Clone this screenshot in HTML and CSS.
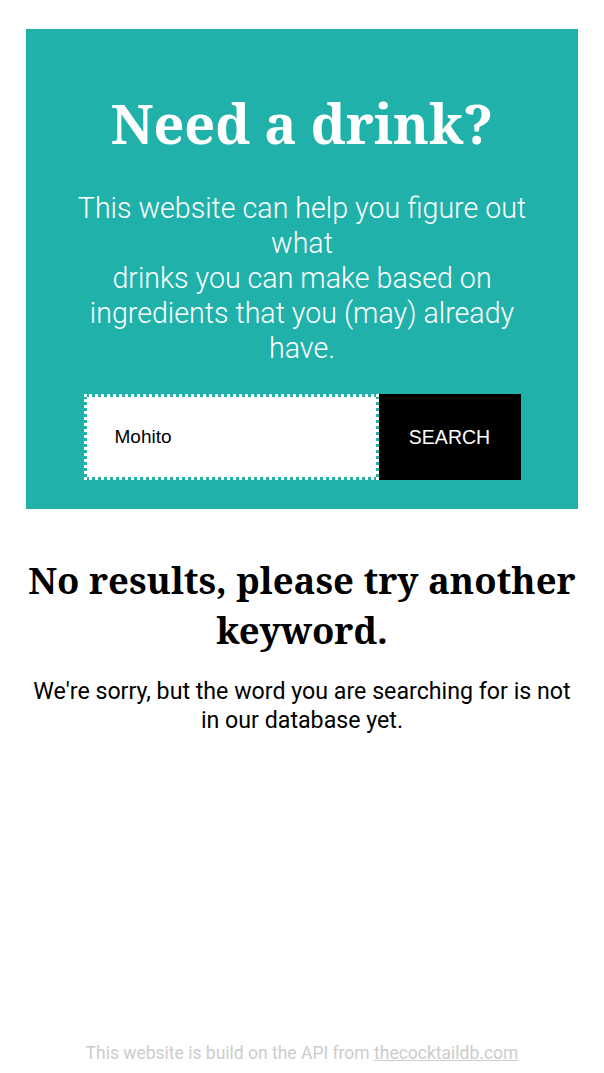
FILE: index.html
```html
<!DOCTYPE html>
<html lang="en">
<head>
<meta charset="utf-8">
<title>Need a drink?</title>
<link rel="stylesheet" href="styles.css">
</head>
<body>
<div class="page">
  <header class="hero">
    <h1 class="hero-title">Need a drink?</h1>
    <p class="hero-text">This website can help you figure out what<br>drinks you can make based on ingredients that you (may) already have.</p>
    <form class="search">
      <input class="search-input" type="text" value="Mohito">
      <button class="search-button" type="button">SEARCH</button>
    </form>
  </header>
  <main class="results">
    <h2 class="results-title">No results, please try another keyword.</h2>
    <p class="results-text">We're sorry, but the word you are searching for is not in our database yet.</p>
  </main>
  <footer class="footer">This website is build on the API from <a class="footer-link" href="#">thecocktaildb.com</a></footer>
</div>
</body>
</html>
```

FILE: styles.css
```css
html, body {
  margin: 0;
  padding: 0;
  background: #fff;
}
.page {
  min-height: 100vh;
  box-sizing: border-box;
  padding: 29px 26px 0;
  display: flex;
  flex-direction: column;
  font-family: Roboto, "Noto Sans", sans-serif;
}
.hero {
  background: #20b2aa;
  height: 480px;
  box-sizing: border-box;
  padding: 56px 40px 0;
  display: flex;
  flex-direction: column;
  align-items: center;
  color: #fff;
  text-align: center;
}
.hero-title {
  margin: 0;
  font-family: "Noto Serif", "DejaVu Serif", serif;
  font-weight: 700;
  font-size: 54px;
  line-height: 76px;
}
.hero-text {
  margin: 30px 0 0;
  font-weight: 300;
  font-size: 28.6px;
  line-height: 35px;
}
.search {
  margin-top: 28px;
  display: flex;
}
.search-input {
  width: 295px;
  height: 86px;
  box-sizing: border-box;
  border: 3px dotted #fff;
  outline: none;
  padding: 0 0 0 28px;
  font-family: "Liberation Sans", Arial, sans-serif;
  font-size: 19px;
  color: #000;
  background: #fff;
  background-clip: padding-box;
}
.search-button {
  width: 142px;
  height: 86px;
  border: 0;
  background: #000;
  color: #fff;
  font-family: "Liberation Sans", Arial, sans-serif;
  font-size: 19.5px;
  padding: 0;
}
.results {
  text-align: center;
  padding-top: 19px;
}
.results-title {
  margin: 27px 0 0;
  font-family: "Noto Serif", "DejaVu Serif", serif;
  font-weight: 700;
  font-size: 36.5px;
  line-height: 50px;
}
.results-text {
  margin: 22px 0 0;
  font-size: 23.2px;
  line-height: 29px;
}
.footer {
  margin-top: auto;
  padding-bottom: 10px;
  text-align: center;
  color: #cccccc;
  font-size: 17.5px;
  line-height: 20px;
}
.footer-link {
  color: #cccccc;
}
```
